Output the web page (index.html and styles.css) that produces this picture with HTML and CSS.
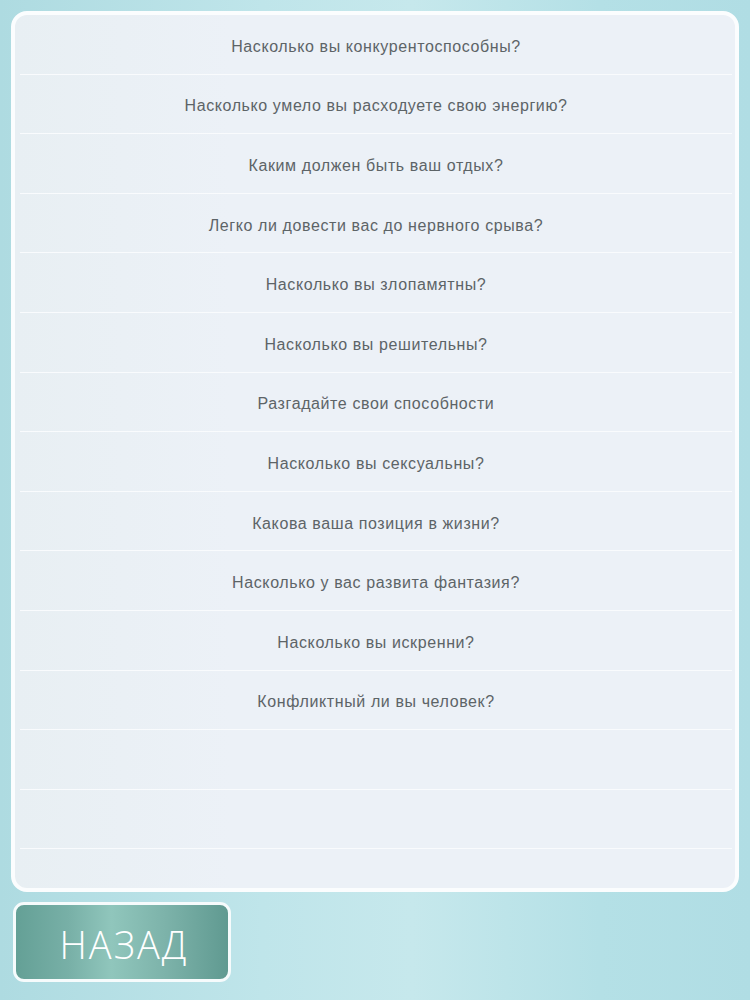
FILE: index.html
```html
<!DOCTYPE html>
<html lang="ru">
<head>
<meta charset="utf-8">
<link rel="stylesheet" href="styles.css">
</head>
<body>
<div class="screen">
  <div class="panel">
    <ul class="list">
      <li class="row">Насколько вы конкурентоспособны?</li>
      <li class="row">Насколько умело вы расходуете свою энергию?</li>
      <li class="row">Каким должен быть ваш отдых?</li>
      <li class="row">Легко ли довести вас до нервного срыва?</li>
      <li class="row">Насколько вы злопамятны?</li>
      <li class="row">Насколько вы решительны?</li>
      <li class="row">Разгадайте свои способности</li>
      <li class="row">Насколько вы сексуальны?</li>
      <li class="row">Какова ваша позиция в жизни?</li>
      <li class="row">Насколько у вас развита фантазия?</li>
      <li class="row">Насколько вы искренни?</li>
      <li class="row">Конфликтный ли вы человек?</li>
      <li class="row"></li>
      <li class="row"></li>
      <li class="row"></li>
    </ul>
  </div>
  <div class="footer">
    <button class="back">НАЗАД</button>
  </div>
</div>
</body>
</html>
```
FILE: styles.css
```css
html, body {
  margin: 0;
  padding: 0;
}
body {
  width: 750px;
  height: 1000px;
  overflow: hidden;
  background: linear-gradient(to right, #aedbe1 0%, #bfe5ea 35%, #c6e8ec 55%, #b4e0e6 80%, #b0dde4 100%);
  font-family: "Liberation Sans", Arial, sans-serif;
}
.screen {
  display: flex;
  flex-direction: column;
  padding: 11px 11px 0 11px;
}
.panel {
  width: 728px;
  height: 881px;
  box-sizing: border-box;
  border: 4px solid #fbfdfe;
  border-radius: 16px;
  background: linear-gradient(to right, #e8eff3 0%, #ecf1f7 30%, #ecf1f7 100%);
  overflow: hidden;
}
.list {
  list-style: none;
  margin: 0;
  padding: 0 3px 0 5px;
}
.row {
  height: 59.6px;
  box-sizing: border-box;
  padding-top: 5px;
  border-bottom: 1px solid #f9fbfd;
  display: flex;
  align-items: center;
  justify-content: center;
  font-size: 16px;
  letter-spacing: 0.6px;
  color: #5d6467;
}
.footer {
  display: flex;
  padding: 10px 0 0 2px;
}
.back {
  width: 218px;
  height: 80px;
  box-sizing: border-box;
  border: 3px solid #f6fbfc;
  border-radius: 11px;
  background: linear-gradient(to right, #64a096 0%, #78b0a7 25%, #90c6bc 45%, #7db3aa 70%, #609a91 100%);
  color: #ffffff;
  font-family: "Open Sans", sans-serif;
  font-weight: 300;
  font-size: 38px;
  padding: 4px 0 0 4px;
  letter-spacing: 2px;
}
```
